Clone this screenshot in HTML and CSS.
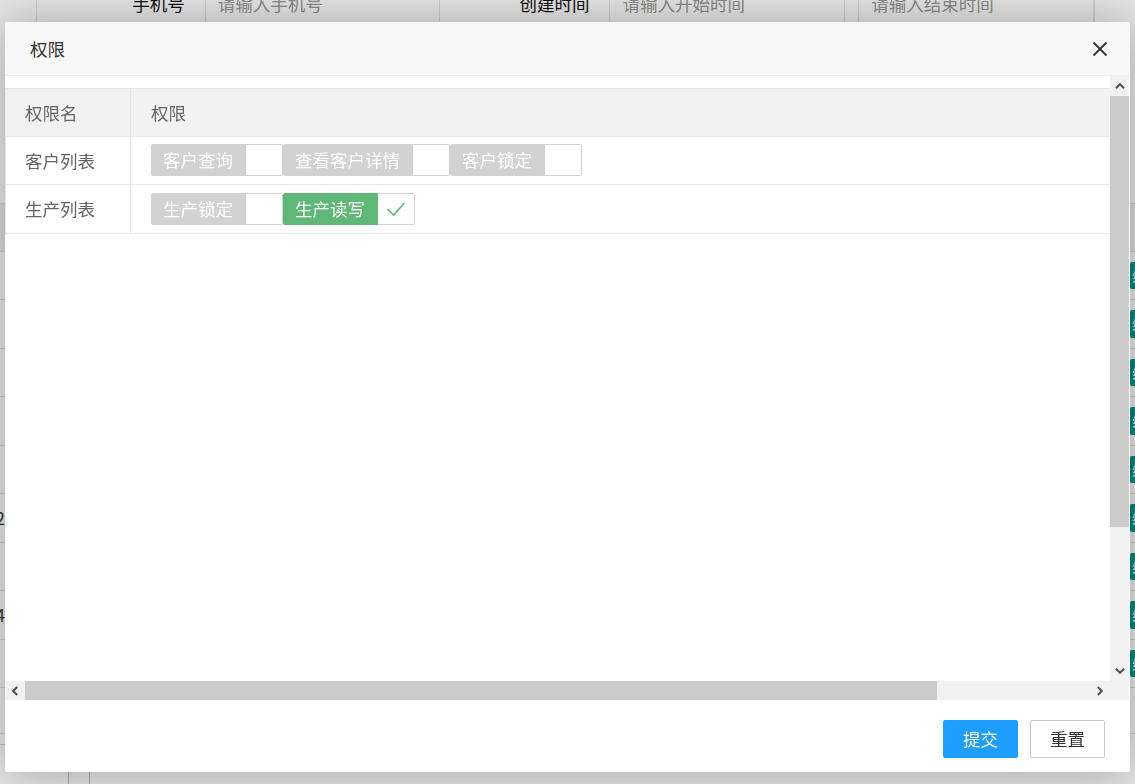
FILE: index.html
```html
<!DOCTYPE html>
<html lang="zh-CN">
<head>
  <meta charset="UTF-8" />
  <title>权限</title>
  <link rel="stylesheet" href="styles.css">
</head>
<body>
  <!-- 背景页面（列表页） -->
  <div class="page">
    <div class="search-row">
      <label class="search-label">手机号</label>
      <div class="search-input">请输入手机号</div>
      <label class="search-label label-wide">创建时间</label>
      <div class="search-input input-date">请输入开始时间</div>
      <span class="search-sep"></span>
      <div class="search-input input-date">请输入结束时间</div>
    </div>

    <div class="list">
      <div class="list-row list-head"><div class="lead"></div><div class="fill"></div><div class="ops"></div></div>
      <div class="list-row"><div class="lead"></div><div class="fill"></div><div class="ops"><span class="btn-xs">编辑</span></div></div>
      <div class="list-row"><div class="lead"></div><div class="fill"></div><div class="ops"><span class="btn-xs">编辑</span></div></div>
      <div class="list-row"><div class="lead"></div><div class="fill"></div><div class="ops"><span class="btn-xs">编辑</span></div></div>
      <div class="list-row"><div class="lead"></div><div class="fill"></div><div class="ops"><span class="btn-xs">编辑</span></div></div>
      <div class="list-row"><div class="lead"></div><div class="fill"></div><div class="ops"><span class="btn-xs">编辑</span></div></div>
      <div class="list-row"><div class="lead">132</div><div class="fill"></div><div class="ops"><span class="btn-xs">编辑</span></div></div>
      <div class="list-row"><div class="lead"></div><div class="fill"></div><div class="ops"><span class="btn-xs">编辑</span></div></div>
      <div class="list-row"><div class="lead">134</div><div class="fill"></div><div class="ops"><span class="btn-xs">编辑</span></div></div>
      <div class="list-row"><div class="lead"></div><div class="fill"></div><div class="ops"><span class="btn-xs">编辑</span></div></div>
    </div>

    <div class="pager">
      <div class="pager-line"></div>
      <div class="pager-box"></div>
    </div>
  </div>

  <div class="shade"></div>

  <!-- 弹出层：权限 -->
  <div class="layer">
    <div class="layer-title">
      <span>权限</span>
      <a class="layer-close">
        <svg width="16" height="16" viewBox="0 0 16 16">
          <line x1="1.5" y1="1.5" x2="14.5" y2="14.5" stroke="#333" stroke-width="1.8"/>
          <line x1="14.5" y1="1.5" x2="1.5" y2="14.5" stroke="#333" stroke-width="1.8"/>
        </svg>
      </a>
    </div>

    <div class="layer-content">
      <div class="scroll-view">
        <div class="perm-table">
          <div class="perm-row perm-head">
            <div class="perm-name">权限名</div>
            <div class="perm-cell">权限</div>
          </div>
          <div class="perm-row">
            <div class="perm-name">客户列表</div>
            <div class="perm-cell">
              <div class="cb"><span class="cb-text">客户查询</span><i class="cb-box"></i></div>
              <div class="cb"><span class="cb-text">查看客户详情</span><i class="cb-box"></i></div>
              <div class="cb"><span class="cb-text">客户锁定</span><i class="cb-box"></i></div>
            </div>
          </div>
          <div class="perm-row">
            <div class="perm-name">生产列表</div>
            <div class="perm-cell">
              <div class="cb"><span class="cb-text">生产锁定</span><i class="cb-box"></i></div>
              <div class="cb cb-checked">
                <span class="cb-text">生产读写</span>
                <i class="cb-box">
                  <svg width="20" height="16" viewBox="0 0 20 16">
                    <polyline points="1.5,8 7.5,14 18.5,2" fill="none" stroke="#5FB878" stroke-width="1.6"/>
                  </svg>
                </i>
              </div>
            </div>
          </div>
        </div>
      </div>

      <div class="vbar">
        <div class="sb-btn">
          <svg width="10" height="6" viewBox="0 0 10 6"><polyline points="1,5.2 5,1.2 9,5.2" fill="none" stroke="#505050" stroke-width="2"/></svg>
        </div>
        <div class="vbar-thumb"></div>
        <div class="sb-track"></div>
        <div class="sb-btn">
          <svg width="10" height="6" viewBox="0 0 10 6"><polyline points="1,0.8 5,4.8 9,0.8" fill="none" stroke="#505050" stroke-width="2"/></svg>
        </div>
      </div>

      <div class="hbar">
        <div class="sb-btn">
          <svg width="6" height="10" viewBox="0 0 6 10"><polyline points="5.2,1 1.2,5 5.2,9" fill="none" stroke="#505050" stroke-width="2"/></svg>
        </div>
        <div class="hbar-thumb"></div>
        <div class="sb-track"></div>
        <div class="sb-btn">
          <svg width="6" height="10" viewBox="0 0 6 10"><polyline points="0.8,1 4.8,5 0.8,9" fill="none" stroke="#505050" stroke-width="2"/></svg>
        </div>
      </div>

      <div class="sb-corner"></div>
    </div>

    <div class="layer-btns">
      <button type="button" class="btn btn-normal">提交</button>
      <button type="button" class="btn btn-primary">重置</button>
    </div>
  </div>
</body>
</html>
```

FILE: styles.css
```css
/* ---------- 基础 ---------- */
body {
  margin: 0;
  background: #fff;
  font-family: "Noto Sans CJK SC", "Noto Sans", sans-serif;
  font-size: 17.5px;
  color: #666;
  overflow: hidden;
  height: 784px;
}

/* ---------- 背景列表页 ---------- */
.page {
  margin-top: -15px;
}
.search-row {
  display: flex;
  height: 38px;
  margin-left: 36px;
  width: 1059px;
  border-left: 1px solid #e2e2e2;
  border-right: 1px solid #e2e2e2;
  box-sizing: border-box;
}
.search-label {
  width: 168px;
  padding-right: 20px;
  box-sizing: border-box;
  text-align: right;
  line-height: 38px;
  color: #111;
}
.label-wide {
  width: 170px;
}
.search-input {
  width: 235px;
  height: 38px;
  box-sizing: border-box;
  border: 1px solid #e2e2e2;
  padding-left: 12px;
  line-height: 36px;
  color: #999;
}
.input-date {
  width: 236px;
}
.search-sep {
  width: 13px;
}

.list {
  margin-top: 180px;
}
.list-row {
  display: flex;
  align-items: center;
  height: 48.5px;
  box-sizing: border-box;
  border-bottom: 1px solid #e2e2e2;
}
.list-head {
  background: #f2f2f2;
  border-top: 1px solid #e2e2e2;
}
/* 数字只露出最后一位，向左溢出 */
.lead {
  flex: 0 0 5px;
  min-width: 0;
  direction: rtl;
  text-align: right;
  color: #333;
  white-space: nowrap;
}
.fill {
  flex: 1;
}
.ops {
  flex: 0 0 5px;
  min-width: 0;
  white-space: nowrap;
}
.btn-xs {
  display: inline-block;
  height: 27.5px;
  line-height: 27.5px;
  padding: 0 6px 0 2px;
  background: #009688;
  color: #fff;
  font-size: 15px;
  border-radius: 2px;
}

.pager {
  margin-top: 45px;
  border-top: 1px solid #e2e2e2;
}
.pager-line {
  width: 68px;
  height: 10px;
  border-bottom: 1px solid #d6d6d6;
}
.pager-box {
  margin: 25px 0 0 68px;
  width: 20px;
  height: 20px;
  border: 1px solid #bbb;
}

/* ---------- 遮罩 + 弹出层 ---------- */
.shade {
  position: fixed;
  inset: 0;
  background: rgba(0, 0, 0, 0.1);
}
.layer {
  position: fixed;
  left: 5px;
  top: 22px;
  width: 1125px;
  height: 750px;
  background: #fff;
  border-radius: 2px;
  box-shadow: 1px 1px 50px rgba(0, 0, 0, 0.3);
  display: flex;
  flex-direction: column;
}
.layer-title {
  height: 54px;
  flex: 0 0 54px;
  box-sizing: border-box;
  padding: 0 22px 0 25px;
  background: #f8f8f8;
  border-bottom: 1px solid #eee;
  border-radius: 2px 2px 0 0;
  display: flex;
  align-items: center;
  justify-content: space-between;
  color: #333;
}
.layer-close {
  display: flex;
  cursor: pointer;
}

.layer-content {
  flex: 0 0 624px;
  display: grid;
  grid-template-columns: 1105px 19px;
  grid-template-rows: 605px 19px;
}
.scroll-view {
  padding-top: 12px;
  overflow: hidden;
}

/* ----- 表格 ----- */
.perm-table {
  border-left: 1px solid #e6e6e6;
}
.perm-row {
  display: flex;
  height: 48.5px;
  box-sizing: border-box;
  border-bottom: 1px solid #e6e6e6;
}
.perm-head {
  background: #f2f2f2;
  border-top: 1px solid #e6e6e6;
}
.perm-name {
  width: 125px;
  box-sizing: border-box;
  padding-left: 19px;
  border-right: 1px solid #e6e6e6;
  display: flex;
  align-items: center;
}
.perm-cell {
  flex: 1;
  padding-left: 20px;
  display: flex;
  align-items: center;
}

/* ----- 复选框（layui 风格） ----- */
.cb {
  display: flex;
  height: 32px;
}
.cb-text {
  padding: 0 13px 0 12px;
  line-height: 32px;
  background: #d2d2d2;
  color: #fff;
  border-radius: 2px 0 0 2px;
}
.cb-box {
  width: 37px;
  box-sizing: border-box;
  border: 1px solid #d2d2d2;
  border-left: none;
  border-radius: 0 2px 2px 0;
  background: #fff;
  display: flex;
  align-items: center;
  justify-content: center;
}
.cb-checked .cb-text {
  background: #5FB878;
}

/* ----- 滚动条 ----- */
.vbar {
  display: flex;
  flex-direction: column;
  background: #f1f1f1;
}
.hbar {
  display: flex;
  background: #f1f1f1;
}
.sb-btn {
  flex: 0 0 20px;
  display: flex;
  align-items: center;
  justify-content: center;
}
.vbar-thumb {
  flex: 0 0 431px;
  background: #cbcbcb;
}
.hbar-thumb {
  flex: 0 0 912px;
  background: #cbcbcb;
}
.sb-track {
  flex: 1;
}
.sb-corner {
  background: #f1f1f1;
}

/* ----- 底部按钮 ----- */
.layer-btns {
  flex: 1;
  display: flex;
  justify-content: flex-end;
  align-items: flex-start;
  gap: 12px;
  padding: 20px 25px 0 0;
}
.btn {
  height: 37.5px;
  padding: 0 19px;
  font-family: inherit;
  font-size: 17.5px;
  border-radius: 2px;
  cursor: pointer;
}
.btn-normal {
  background: #1E9FFF;
  color: #fff;
  border: 1px solid #1E9FFF;
}
.btn-primary {
  background: #fff;
  color: #333;
  border: 1px solid #c9c9c9;
}
```
